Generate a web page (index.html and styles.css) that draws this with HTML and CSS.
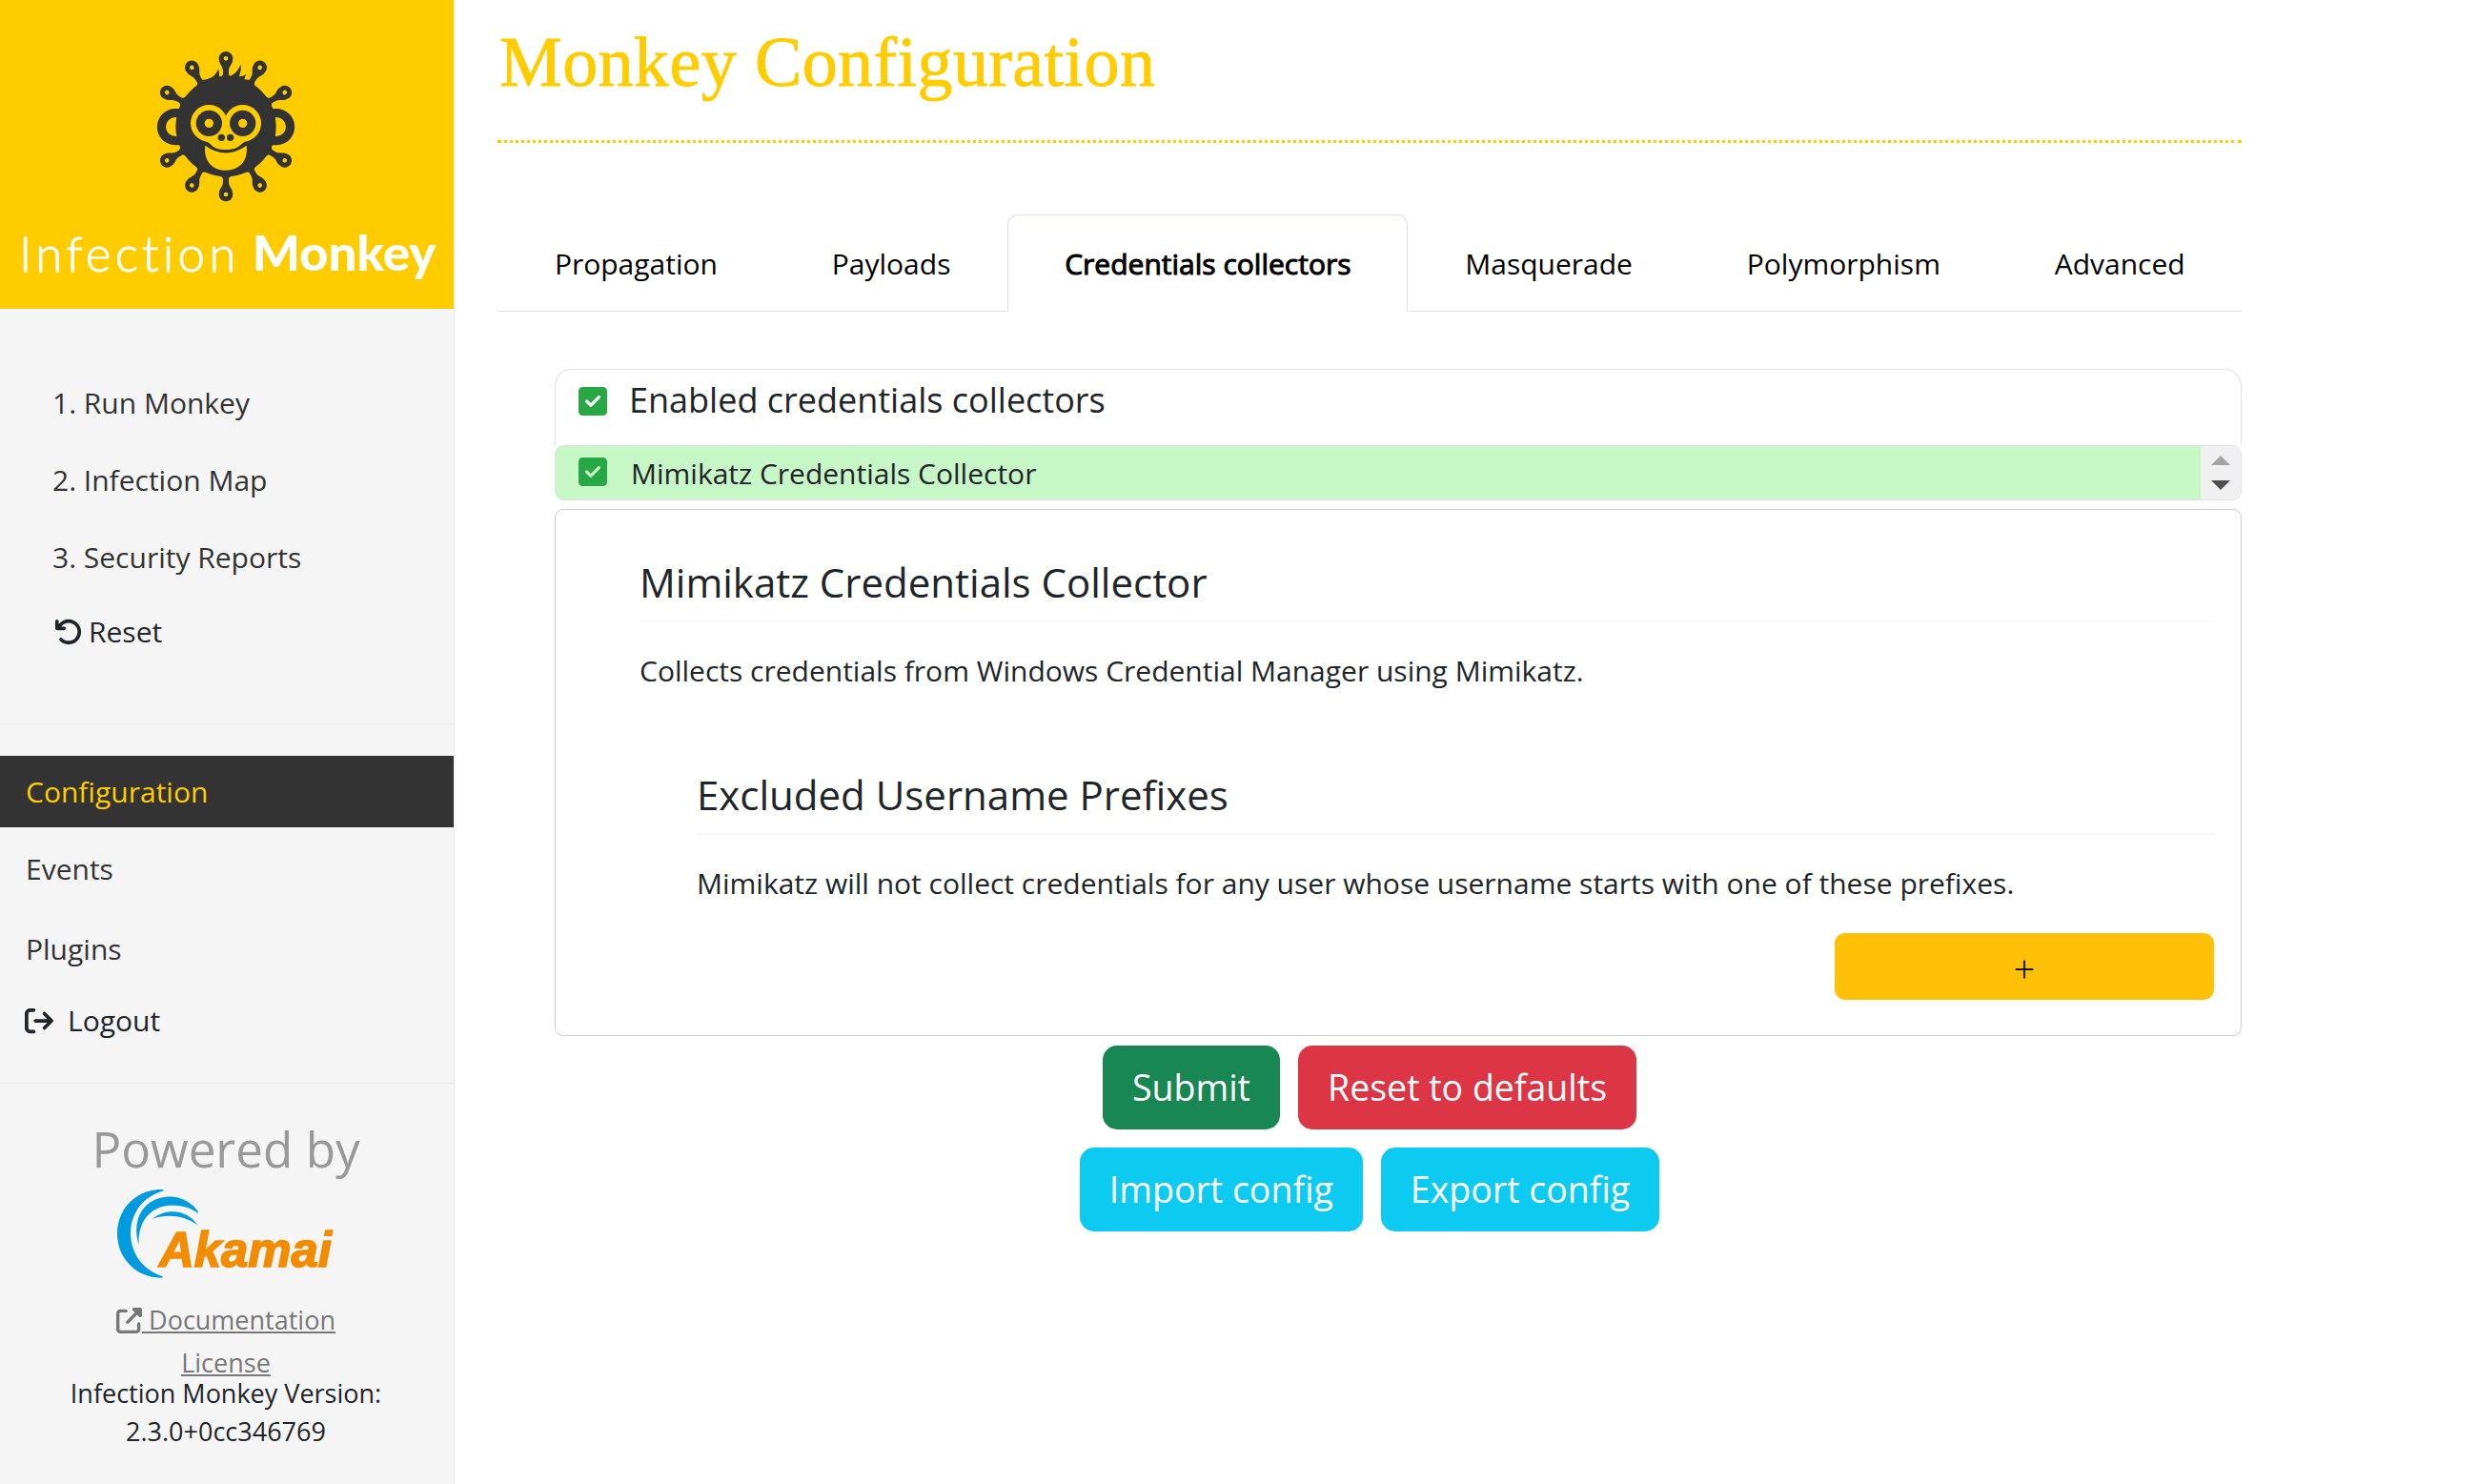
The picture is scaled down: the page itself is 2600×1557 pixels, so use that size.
FILE: index.html
```html
<!DOCTYPE html>
<html lang="en">
<head>
<meta charset="utf-8">
<title>Infection Monkey</title>
<link rel="stylesheet" href="styles.css">
</head>
<body>
<aside class="sidebar">
  <svg class="brand" viewBox="0 0 1428 972" role="img" aria-label="Infection Monkey">
    <defs>
      <g id="spike">
        <path d="M-21-206C-18-192-9-190-9-172V-166C-9-159-14-157-34-150H34C14-157 9-159 9-166V-172C9-190 18-192 21-206Z"/>
        <circle cy="-214" r="22"/>
        <circle cy="-214" r="7" class="brand-bg"/>
      </g>
    </defs>
    <g class="brand-ink">
      <path d="M566 342H552a57 57 0 0 0 0 115H566ZM856 342H870a57 57 0 0 1 0 115H856Z"/>
      <circle cx="552" cy="399" r="30" class="brand-bg"/>
      <circle cx="870" cy="399" r="30" class="brand-bg"/>
      <circle cx="711" cy="398" r="158"/>
      <g transform="translate(711 398)">
        <use href="#spike"/><use href="#spike" transform="rotate(30)"/><use href="#spike" transform="rotate(60)"/>
        <use href="#spike" transform="rotate(120)"/><use href="#spike" transform="rotate(150)"/><use href="#spike" transform="rotate(180)"/>
        <use href="#spike" transform="rotate(210)"/><use href="#spike" transform="rotate(240)"/>
        <use href="#spike" transform="rotate(300)"/><use href="#spike" transform="rotate(330)"/>
      </g>
      <path d="M636 252C664 250 680 238 687 217Q691 228 690 242L720 240C738 236 750 222 757 203C761 216 756 228 753 240Q767 242 776 232Q770 242 769 250L790 252V275H636Z"/>
    </g>
    <g class="brand-bg">
      <circle cx="658" cy="388" r="58"/><circle cx="764" cy="388" r="58"/>
      <path d="M640 443C668 446 660 470 711 471C762 470 754 446 782 443V400H640Z"/>
      <path d="M646 458C688 489 734 489 776 458C782 505 755 536 711 536C667 536 640 505 646 458Z"/>
    </g>
    <g class="brand-ink">
      <circle cx="658" cy="388" r="41"/><circle cx="764" cy="388" r="41"/>
      <circle cx="697" cy="433" r="11"/><circle cx="725" cy="433" r="11"/>
    </g>
    <circle cx="658" cy="388" r="14" class="brand-bg"/><circle cx="764" cy="388" r="14" class="brand-bg"/>
    <text class="brand-light" x="60" y="855" textLength="682">Infection</text>
    <text class="brand-bold" x="794" y="853" textLength="578" lengthAdjust="spacingAndGlyphs">Monkey</text>
  </svg>

  <ul class="steps">
    <li><a>1. Run Monkey</a></li>
    <li><a>2. Infection Map</a></li>
    <li><a>3. Security Reports</a></li>
    <li class="reset"><svg class="icon" viewBox="0 0 512 512"><path d="M125.700 160H176c17.700 0 32 14.300 32 32s-14.300 32-32 32H48c-17.700 0-32-14.300-32-32V64c0-17.700 14.300-32 32-32s32 14.300 32 32v51.200L97.600 97.600c87.500-87.500 229.300-87.500 316.800 0s87.500 229.300 0 316.800s-229.300 87.500-316.800 0c-12.500-12.500-12.500-32.800 0-45.300s32.800-12.500 45.300 0c62.500 62.500 163.800 62.500 226.300 0s62.500-163.800 0-226.300s-163.800-62.500-226.300 0L125.700 160z"/></svg><a>Reset</a></li>
  </ul>

  <ul class="nav">
    <li class="active"><a>Configuration</a></li>
    <li><a>Events</a></li>
    <li><a>Plugins</a></li>
    <li class="logout"><svg class="icon" viewBox="0 0 512 512"><path d="M502.600 278.600c12.500-12.500 12.500-32.800 0-45.300l-128-128c-12.500-12.500-32.800-12.500-45.300 0s-12.500 32.800 0 45.300L402.700 224 192 224c-17.700 0-32 14.300-32 32s14.300 32 32 32l210.700 0-73.400 73.400c-12.500 12.500-12.500 32.800 0 45.300s32.800 12.500 45.300 0l128-128zM160 96c17.700 0 32-14.300 32-32s-14.300-32-32-32L96 32C43 32 0 75 0 128L0 384c0 53 43 96 96 96l64 0c17.700 0 32-14.300 32-32s-14.300-32-32-32l-64 0c-17.700 0-32-14.300-32-32l0-256c0-17.700 14.300-32 32-32l64 0z"/></svg><a>Logout</a></li>
  </ul>

  <footer class="about">
    <div class="powered">Powered by</div>
    <svg class="akamai" viewBox="360 345 700 300" role="img" aria-label="Akamai">
      <g class="wave">
        <path d="M515 354C435 350 369 410 369 493C369 575 435 636 513 632L511 627C455 610 411 560 411 490C411 430 450 375 514 358Z"/>
        <path d="M437 529C410 440 460 376 535 376C575 376 610 400 624 424V429C600 410 570 404 540 404C480 404 432 450 437 529Z"/>
        <path d="M481 446C520 412 590 415 622 466C580 436 530 430 481 446Z"/>
      </g>
      <text class="akamai-name" x="501" y="598" textLength="544" lengthAdjust="spacingAndGlyphs">Akamai</text>
    </svg>
    <div class="link"><svg class="icon" viewBox="0 0 512 512"><path d="M352 0c-12.900 0-24.600 7.800-29.600 19.800s-2.200 25.700 6.900 34.900L370.700 96 201.400 265.400c-12.500 12.500-12.500 32.800 0 45.300s32.800 12.500 45.300 0L416 141.300l41.400 41.400c9.200 9.200 22.900 11.900 34.900 6.900s19.800-16.600 19.800-29.600V32c0-17.700-14.300-32-32-32H352zM80 32C35.800 32 0 67.800 0 112V432c0 44.200 35.800 80 80 80H400c44.200 0 80-35.800 80-80V320c0-17.700-14.300-32-32-32s-32 14.300-32 32V432c0 8.800-7.200 16-16 16H80c-8.800 0-16-7.200-16-16V112c0-8.800 7.200-16 16-16H192c17.700 0 32-14.300 32-32s-14.300-32-32-32H80z"/></svg><a>&nbsp;Documentation</a></div>
    <div class="link"><a>License</a></div>
    <div class="version"><span>Infection Monkey Version:</span><span>2.3.0+0cc346769</span></div>
  </footer>
</aside>

<main class="page">
  <h1>Monkey Configuration</h1>
  <nav class="tabs">
    <a>Propagation</a>
    <a>Payloads</a>
    <a class="active">Credentials collectors</a>
    <a>Masquerade</a>
    <a>Polymorphism</a>
    <a>Advanced</a>
  </nav>

  <div class="panel">
    <section class="group-head">
      <svg class="check" viewBox="0 32 448 448"><path d="M64 32C28.700 32 0 60.700 0 96V416c0 35.300 28.700 64 64 64H384c35.300 0 64-28.700 64-64V96c0-35.300-28.700-64-64-64H64zM337 209L209 337c-9.400 9.400-24.600 9.400-33.900 0l-64-64c-9.400-9.400-9.400-24.600 0-33.900s24.600-9.400 33.900 0l47 47L303 175c9.400-9.400 24.600-9.400 33.900 0s9.400 24.600 0 33.900z"/></svg>
      <span>Enabled credentials collectors</span>
    </section>
    <section class="group-list">
      <div class="row">
        <svg class="check" viewBox="0 32 448 448"><path d="M64 32C28.700 32 0 60.700 0 96V416c0 35.300 28.700 64 64 64H384c35.300 0 64-28.700 64-64V96c0-35.300-28.700-64-64-64H64zM337 209L209 337c-9.400 9.400-24.600 9.400-33.900 0l-64-64c-9.400-9.400-9.400-24.600 0-33.900s24.600-9.400 33.900 0l47 47L303 175c9.400-9.400 24.600-9.400 33.900 0s9.400 24.600 0 33.900z"/></svg>
        <span>Mimikatz Credentials Collector</span>
      </div>
      <div class="scroll">
        <svg viewBox="0 0 42 56"><path class="up" d="M11 20L21 10L31 20Z"/><path class="down" d="M11 36H31L21 46Z"/></svg>
      </div>
    </section>
    <section class="detail">
      <h2>Mimikatz Credentials Collector</h2>
      <p>Collects credentials from Windows Credential Manager using Mimikatz.</p>
      <div class="sub">
        <h2>Excluded Username Prefixes</h2>
        <p>Mimikatz will not collect credentials for any user whose username starts with one of these prefixes.</p>
      </div>
      <button class="add">+</button>
    </section>
  </div>

  <div class="actions">
    <div class="action-row"><button class="btn green">Submit</button><button class="btn red">Reset to defaults</button></div>
    <div class="action-row"><button class="btn cyan">Import config</button><button class="btn cyan">Export config</button></div>
  </div>
</main>
</body>
</html>
```
FILE: styles.css
```css
* { box-sizing: border-box; }
body { margin: 0; display: flex; height: 1557px; background: #fff; color: #212529; font: 30px/45px "Open Sans", sans-serif; }
ul { list-style: none; margin: 0; padding: 0; }
h1, h2, p { margin: 0; font-weight: 400; }
button { border: 0; padding: 0; font: inherit; }

.sidebar { width: 477px; flex: none; background: #f5f5f5; border-right: 1px solid #e7e7e7; }
.brand { display: block; width: 476px; height: 324px; background: #fc0; }
.brand-ink { fill: #333; }
.brand-bg { fill: #fc0; }
.brand text { fill: #fff; }
.brand-light { font: 300 153px Lato, sans-serif; font-variant-ligatures: none; stroke: #fff; stroke-width: 3px; }
.brand-bold { font: 900 153px Lato, sans-serif; }
.icon { fill: currentColor; flex: none; }

.steps { height: 436px; padding: 76px 0 0 55px; border-bottom: 1px solid #e7e7e7; color: #333; }
.steps li { height: 81px; }
.steps .reset { display: flex; margin-top: -3px; color: #212529; }
.steps .icon { width: 30px; height: 30px; margin: 8px 6px 0 2px; }

.nav { height: 377px; padding-top: 33px; border-bottom: 1px solid #e7e7e7; color: #333; }
.nav li { height: 75px; padding: 15px 27px; margin-bottom: 6px; }
.nav li + li { margin-bottom: 9px; }
.nav .active { background: #333; color: #fc0; }
.nav .logout { display: flex; color: #212529; padding-top: 6px; }
.nav .icon { width: 30px; height: 30px; margin: 8px 15px 0 -1px; }

.about { width: 474px; padding-top: 38px; text-align: center; }
.powered { font-size: 51.200px; line-height: 60px; color: #999; }
.akamai { display: block; width: 233px; height: 100px; margin: 10px auto 17px 120px; }
.wave { fill: #009bde; }
.akamai-name { font: italic 700 158px "Liberation Sans", sans-serif; fill: #f38b00; stroke: #f38b00; stroke-width: 5px; }
.link { display: flex; justify-content: center; height: 45px; font-size: 27px; color: #777; }
.link a { text-decoration: underline; }
.link .icon { width: 27px; height: 27px; margin-top: 10px; }
.version { display: flex; flex-direction: column; margin-top: -10px; font-size: 27px; line-height: 40px; }

.page { width: 1830px; margin-left: 45px; }
h1 { height: 150px; padding: 13px 0 0 2px; border-bottom: 3px dotted #fc0; color: #fc0; font: 74px/104px "Liberation Serif", serif; letter-spacing: 0.4px; -webkit-text-stroke: 0.8px #fc0; }
.tabs { display: flex; height: 102px; margin-top: 75px; border-bottom: 1px solid #dee2e6; color: #000; }
.tabs a { height: 102px; padding: 28px 58.900px 0; border: 1px solid transparent; border-radius: 11px 11px 0 0; white-space: nowrap; }
.tabs .active { background: #fff; border-color: #dee2e6 #dee2e6 #fff; -webkit-text-stroke: 1px #000; }

.panel { margin: 60px 0 0 60px; }
.group-head { display: flex; height: 80px; padding: 18px 24px; border: 1px solid #dee2e6; border-bottom: 0; border-radius: 18px 18px 0 0; font-size: 36px; }
.group-head span { margin: -9px 0 0 1px; }
.check { width: 30px; height: 30px; margin-right: 22px; fill: #28a745; flex: none; }
.group-list { display: flex; height: 58px; border: 1px solid #dee2e6; border-radius: 9px; overflow: hidden; }
.row { flex: 1; display: flex; padding: 12px 24px; background: #c7f6c7; }
.row span { margin: -6px 0 0 3px; }
.scroll { width: 42px; background: #f0f0f0; }
.scroll svg { display: block; }
.up { fill: #a3a3a3; }
.down { fill: #505050; }
.detail { display: flex; flex-direction: column; height: 553px; margin-top: 9px; padding: 46px 28px 0 88px; border: 1px solid #ccc; border-radius: 9px; }
h2 { height: 72px; border-bottom: 2px solid #f9f9f9; font-size: 42px; line-height: 60px; }
p { margin-top: 28px; }
.sub { margin-left: 60px; padding-top: 78px; }
.add { width: 398px; height: 70px; margin: 30px 0 0 auto; padding-top: 4px; border-radius: 11px; background: #ffc107; color: #000; font-size: 40px; font-weight: 300; line-height: 40px; }

.actions { display: flex; flex-direction: column; gap: 19px; padding-top: 10px; }
.action-row { display: flex; justify-content: center; gap: 19px; }
.btn { height: 88px; padding: 0 31px 2px; border-radius: 15px; color: #fff; font-size: 37.500px; }
.green { background: #198754; }
.red { background: #dc3545; }
.cyan { background: #0dcaf0; }
```
